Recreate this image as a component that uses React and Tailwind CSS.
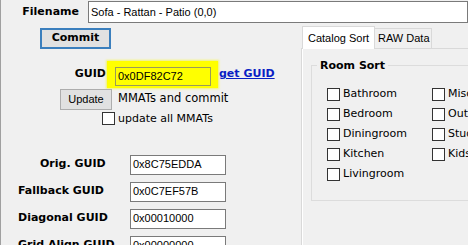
import React from "react";

const sans = { fontFamily: '"Liberation Sans", Arial, sans-serif' };
const verdana = { fontFamily: '"DejaVu Sans", Verdana, sans-serif' };

const guidRows = [
  { label: "Orig. GUID", value: "0x8C75EDDA", pad: "pl-[39px]" },
  { label: "Fallback GUID", value: "0x0C7EF57B", pad: "pl-[17px]" },
  { label: "Diagonal GUID", value: "0x00010000", pad: "pl-[17px]" },
  { label: "Grid Align GUID", value: "0x00000000", pad: "pl-[17px]" },
];

const colA = ["Bathroom", "Bedroom", "Diningroom", "Kitchen", "Livingroom"];
const colB = ["Misc", "Outdoor", "Study", "Kids"];

const Box = () => (
  <span className="inline-block w-[13px] h-[13px] border border-[#333333] bg-white shrink-0" />
);

const CheckItem = ({ text }) => (
  <div className="h-[20px] flex items-center">
    <Box />
    <span className="ml-[3px] text-[11px] text-black whitespace-nowrap" style={verdana}>
      {text}
    </span>
  </div>
);

const App = () => {
  return (
    <div className="w-[468px] h-[245px] overflow-hidden bg-[#f0f0f0] border-l border-[#a0a0a0] flex flex-col">
      {/* filename row */}
      <div className="h-[25px] flex items-start pt-[1px] shrink-0">
        <div
          className="w-[105px] h-[22px] flex items-center justify-end font-bold text-[11px] text-black"
          style={verdana}
        >
          Filename
        </div>
        <div
          className="ml-[9px] h-[22px] w-[380px] shrink-0 border border-[#7a7a7a] bg-white flex items-center px-[2px] text-[11px] text-black whitespace-nowrap"
          style={sans}
        >
          Sofa - Rattan - Patio (0,0)
        </div>
      </div>

      <div className="flex-1 flex min-h-0">
        {/* left column */}
        <div className="w-[300px] shrink-0 flex flex-col">
          <button
            className="mt-[3px] ml-[39px] w-[71px] h-[21px] border-2 border-[#3b7fbd] bg-[#e1e1e1] font-bold text-[11px] text-black flex items-center justify-center"
            style={verdana}
          >
            Commit
          </button>

          <div className="mt-[12px] flex items-center">
            <div className="w-[105px] text-right font-bold text-[11px] text-black" style={verdana}>
              GUID
            </div>
            <div className="ml-px w-[111px] h-[27px] bg-[#ffff00] shadow-[0_0_2px_1px_#f4f46a] pl-[8px] pt-[6px]">
              <div
                className="w-[96px] h-[19px] border border-[#9a9a5a] bg-[#ffff00] flex items-center px-[2px] text-[11px] text-black"
                style={sans}
              >
                0x0DF82C72
              </div>
            </div>
            <span
              className="ml-[1px] font-bold text-[11px] text-[#0a1fc4] underline whitespace-nowrap"
              style={verdana}
            >
              get GUID
            </span>
          </div>

          <div className="mt-px flex items-center">
            <button
              className="ml-[59px] w-[52px] h-[21px] border border-[#adadad] bg-[#e1e1e1] text-[11px] text-black flex items-center justify-center"
              style={sans}
            >
              Update
            </button>
            <span className="ml-[6px] text-[11.5px] text-black whitespace-nowrap" style={verdana}>
              MMATs and commit
            </span>
          </div>

          <div className="mt-[3px] flex items-center h-[13px]">
            <span className="ml-[101px]">
              <Box />
            </span>
            <span className="ml-[3px] text-[11px] text-black whitespace-nowrap" style={verdana}>
              update all MMATs
            </span>
          </div>

          <div className="mt-[29px] flex flex-col gap-[7px]">
            {guidRows.map((r) => (
              <div key={r.label} className="flex items-center h-[20px] shrink-0">
                <div
                  className={`w-[129px] shrink-0 ${r.pad} font-bold text-[11px] text-black whitespace-nowrap`}
                  style={verdana}
                >
                  {r.label}
                </div>
                <div
                  className="w-[96px] h-[20px] border border-[#7a7a7a] bg-white flex items-center px-[2px] text-[11px] text-black"
                  style={sans}
                >
                  {r.value}
                </div>
              </div>
            ))}
          </div>
        </div>

        {/* tab control */}
        <div className="flex-1 flex flex-col min-w-0">
          <div className="h-[23px] flex items-end pl-px shrink-0">
            <div
              className="w-[73px] h-[23px] bg-white border border-b-0 border-[#d9d9d9] flex items-center pl-[5px] text-[11px] text-black -mb-px relative whitespace-nowrap"
              style={sans}
            >
              Catalog Sort
            </div>
            <div
              className="w-[57px] h-[20px] bg-[#f0f0f0] border border-l-0 border-b-0 border-[#d9d9d9] flex items-center pl-[3px] text-[11px] text-black whitespace-nowrap"
              style={sans}
            >
              RAW Data
            </div>
          </div>
          <div className="flex-1 border-l border-t border-[#d9d9d9] bg-[#f0f0f0] shadow-[inset_1px_0_0_#ffffff]">
            <fieldset className="ml-[9px] mt-[10px] w-[200px] h-[142px] border border-[#dcdcdc] pl-[15px] pt-[12px]">
              <legend
                className="-ml-[10px] px-[3px] font-bold text-[11px] text-black leading-[13px]"
                style={verdana}
              >
                Room Sort
              </legend>
              <div className="flex">
                <div className="w-[105px] flex flex-col">
                  {colA.map((t) => (
                    <CheckItem key={t} text={t} />
                  ))}
                </div>
                <div className="flex flex-col">
                  {colB.map((t) => (
                    <CheckItem key={t} text={t} />
                  ))}
                </div>
              </div>
            </fieldset>
          </div>
        </div>
      </div>
    </div>
  );
};

export default App;
